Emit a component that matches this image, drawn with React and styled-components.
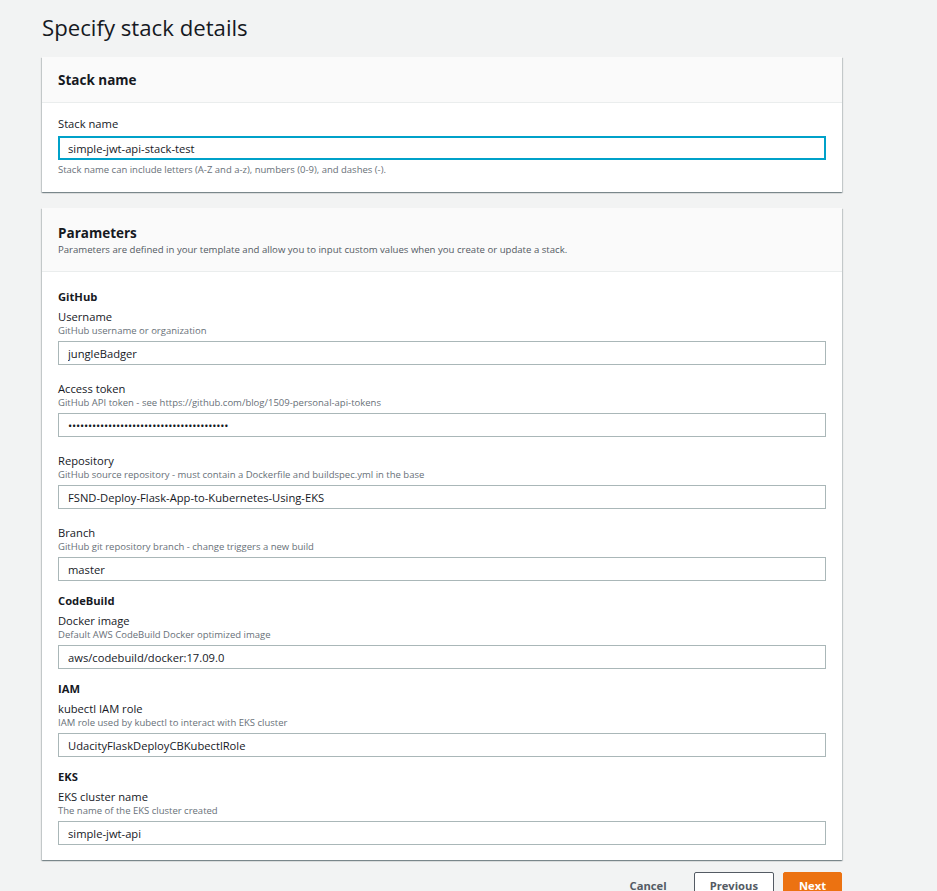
import React from 'react'
import styled, { createGlobalStyle } from 'styled-components'

const GlobalStyle = createGlobalStyle`
    html, body {
        margin: 0;
        padding: 0;
        background-color: #f2f3f3;
        font-family: "Open Sans", "Noto Sans", sans-serif;
        color: #16191f;
    }
`

const Page = styled.div`
    width: 800px;
    padding: 14px 0 0 42px;
    display: flex;
    flex-direction: column;
`

const PageTitle = styled.h1`
    margin: 0 0 15px;
    font-size: 22.2px;
    line-height: 28px;
    font-weight: 400;
    color: #16191f;
`

const Card = styled.section`
    background-color: #fff;
    box-shadow: 0 1px 1px 0 rgba(0,28,36,0.3), 1px 1px 1px 0 rgba(0,28,36,0.15), -1px 1px 1px 0 rgba(0,28,36,0.15);
    margin-bottom: ${p => p.$gap || 16}px;
`

const CardHeader = styled.div`
    background-color: #fafafa;
    border-bottom: 1px solid #eaeded;
    padding: ${p => p.$pad || '13px 16px 12px'};
`

const CardTitle = styled.h2`
    margin: 0;
    font-size: 13.5px;
    line-height: 20px;
    font-weight: 700;
`

const CardDescription = styled.div`
    font-size: 9.6px;
    line-height: 14px;
    color: #545b64;
`

const CardBody = styled.div`
    padding: ${p => p.$pad || '14px 16px 16px'};
    display: flex;
    flex-direction: column;
`

const SectionHeading = styled.h3`
    margin: 0;
    font-size: 11.2px;
    line-height: 16px;
    font-weight: 700;
    &:not(:first-child) {
        margin-top: 12px;
    }
`

const Field = styled.div`
    display: flex;
    flex-direction: column;
    margin-top: ${p => p.$top || 0}px;
`

const Label = styled.label`
    font-size: 11.2px;
    line-height: 14px;
    color: #16191f;
`

const Hint = styled.div`
    font-size: 9.5px;
    line-height: 13px;
    color: #687078;
    margin-top: ${p => p.$top || 0}px;
`

const Input = styled.input`
    box-sizing: border-box;
    width: 100%;
    height: 24px;
    margin: ${p => p.$focused ? '5px 0 0' : '4px 0 0'};
    padding: 0 8px;
    font-family: "Open Sans", "Noto Sans", sans-serif;
    font-size: 11.2px;
    color: #16191f;
    background: #fff;
    border: ${p => p.$focused ? '2px solid #00a1c9' : '1px solid #aab7b8'};
    padding-left: ${p => p.$focused ? 8 : 9}px;
    border-radius: 0;
    outline: none;
    &[type="password"] {
        letter-spacing: -0.2px;
    }
`

const Actions = styled.div`
    display: flex;
    justify-content: flex-end;
    align-items: center;
    gap: 9px;
`

const Button = styled.button`
    height: 26px;
    padding: 0 ${p => p.$link ? 13 : 15}px;
    font-family: "Open Sans", "Noto Sans", sans-serif;
    font-size: 11.2px;
    font-weight: 700;
    color: ${p => p.$primary ? '#fff' : '#545b64'};
    background-color: ${p => p.$primary ? '#ec7211' : p.$link ? 'transparent' : '#fff'};
    border: 1px solid ${p => p.$primary ? '#ec7211' : p.$link ? 'transparent' : '#545b64'};
    border-radius: 2px;
    margin-right: ${p => p.$link ? 4 : 0}px;
    cursor: pointer;
`

const params = [
    { section: 'GitHub', fields: [
        { label: 'Username', hint: 'GitHub username or organization', value: 'jungleBadger' },
        { label: 'Access token', hint: 'GitHub API token - see https://github.com/blog/1509-personal-api-tokens', value: 'x'.repeat(40), secret: true },
        { label: 'Repository', hint: 'GitHub source repository - must contain a Dockerfile and buildspec.yml in the base', value: 'FSND-Deploy-Flask-App-to-Kubernetes-Using-EKS' },
        { label: 'Branch', hint: 'GitHub git repository branch - change triggers a new build', value: 'master' },
    ]},
    { section: 'CodeBuild', fields: [
        { label: 'Docker image', hint: 'Default AWS CodeBuild Docker optimized image', value: 'aws/codebuild/docker:17.09.0' },
    ]},
    { section: 'IAM', fields: [
        { label: 'kubectl IAM role', hint: 'IAM role used by kubectl to interact with EKS cluster', value: 'UdacityFlaskDeployCBKubectlRole' },
    ]},
    { section: 'EKS', fields: [
        { label: 'EKS cluster name', hint: 'The name of the EKS cluster created', value: 'simple-jwt-api' },
    ]},
]

const App = () => {
    return (
        <>
            <GlobalStyle />
            <Page>
                <PageTitle>Specify stack details</PageTitle>

                <Card>
                    <CardHeader>
                        <CardTitle>Stack name</CardTitle>
                    </CardHeader>
                    <CardBody>
                        <Label>Stack name</Label>
                        <Input $focused readOnly value="simple-jwt-api-stack-test" />
                        <Hint $top={3}>Stack name can include letters (A-Z and a-z), numbers (0-9), and dashes (-).</Hint>
                    </CardBody>
                </Card>

                <Card $gap={12}>
                    <CardHeader $pad="15px 16px 14px">
                        <CardTitle>Parameters</CardTitle>
                        <CardDescription>Parameters are defined in your template and allow you to input custom values when you create or update a stack.</CardDescription>
                    </CardHeader>
                    <CardBody $pad="17px 16px 15px">
                        {params.map(group => (
                            <React.Fragment key={group.section}>
                                <SectionHeading>{group.section}</SectionHeading>
                                {group.fields.map((f, i) => (
                                    <Field key={f.label} $top={i === 0 ? 5 : 17}>
                                        <Label>{f.label}</Label>
                                        <Hint>{f.hint}</Hint>
                                        <Input readOnly type={f.secret ? 'password' : 'text'} value={f.value} />
                                    </Field>
                                ))}
                            </React.Fragment>
                        ))}
                    </CardBody>
                </Card>

                <Actions>
                    <Button $link>Cancel</Button>
                    <Button>Previous</Button>
                    <Button $primary>Next</Button>
                </Actions>
            </Page>
        </>
    )
}

export default App
